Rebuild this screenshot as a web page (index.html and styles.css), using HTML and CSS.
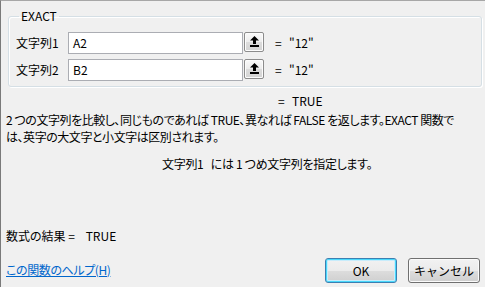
FILE: index.html
```html
<!DOCTYPE html>
<html lang="ja">
<head>
  <meta charset="UTF-8">
  <title>関数の引数</title>
  <link rel="stylesheet" href="styles.css">
</head>
<body>
  <div class="dialog">
    <fieldset class="group-box">
      <legend class="group-title">EXACT</legend>

      <div class="arg-row">
        <span class="arg-label">文字列1</span>
        <div class="arg-input">A2</div>
        <button class="ref-button">
          <svg width="9" height="11" viewBox="0 0 9 11"><path d="M4.5 0 L9 4.5 H6 V8 H3 V4.5 H0 Z" fill="#000"/><rect x="0" y="9" width="9" height="2" fill="#000"/></svg>
        </button>
        <span class="arg-eq">=</span>
        <span class="arg-value">"12"</span>
      </div>

      <div class="arg-row">
        <span class="arg-label">文字列2</span>
        <div class="arg-input">B2</div>
        <button class="ref-button">
          <svg width="9" height="11" viewBox="0 0 9 11"><path d="M4.5 0 L9 4.5 H6 V8 H3 V4.5 H0 Z" fill="#000"/><rect x="0" y="9" width="9" height="2" fill="#000"/></svg>
        </button>
        <span class="arg-eq">=</span>
        <span class="arg-value">"12"</span>
      </div>
    </fieldset>

    <div class="func-result"><span class="arg-eq">=</span><span>TRUE</span></div>

    <p class="func-desc">2 つの文字列を比較し、同じものであれば TRUE、異なれば FALSE を返します。EXACT 関数で<br>は、英字の大文字と小文字は区別されます。</p>

    <p class="arg-desc">文字列1&nbsp;&nbsp; には 1 つめ文字列を指定します。</p>

    <div class="formula-result">数式の結果 =&nbsp;&nbsp;&nbsp; TRUE</div>

    <div class="footer">
      <a href="#" class="help-link">この関数のヘルプ(H)</a>
      <div class="buttons">
        <button class="btn btn-default">OK</button>
        <button class="btn">キャンセル</button>
      </div>
    </div>
  </div>
</body>
</html>
```

FILE: styles.css
```css
* {
  margin: 0;
  padding: 0;
  box-sizing: border-box;
}

body {
  font-family: "Noto Sans CJK JP", "Noto Sans", sans-serif;
  font-size: 12px;
  line-height: 16px;
  font-feature-settings: "palt";
  color: #000;
  background-color: #f0f0f0;
}

.dialog {
  width: 485px;
  height: 287px;
  background-color: #f0f0f0;
  border-top: 1px solid #a7a7a7;
  border-left: 1px solid #7a7a7a;
  display: flex;
  flex-direction: column;
}

.group-box {
  margin: 7px 3px 0 7px;
  border: 1px solid #d5dfe5;
  border-radius: 3px;
  box-shadow: inset 1px 1px 0 #fff, 1px 1px 0 #fff;
  padding: 8px 0 5px 7px;
  display: flex;
  flex-direction: column;
  gap: 5px;
}

.group-title {
  margin-left: 3px;
  padding: 0 2px;
  line-height: 16px;
}

.arg-row {
  display: flex;
  align-items: center;
  height: 22px;
}

.arg-label {
  width: 52px;
}

.arg-input {
  width: 175px;
  height: 22px;
  background-color: #fff;
  border: 1px solid #abadb3;
  padding: 0 4px;
  line-height: 20px;
}

.ref-button {
  width: 20px;
  height: 20px;
  margin-left: 1px;
  align-self: flex-start;
  border: 1px solid #8c8c8c;
  border-radius: 2px;
  background: linear-gradient(to bottom, #fafafa 0%, #ececec 50%, #dcdcdc 51%, #d4d4d4 100%);
  box-shadow: inset 0 0 0 1px #fcfcfc;
  display: flex;
  align-items: flex-start;
  justify-content: center;
  padding-top: 3px;
}

.arg-eq {
  margin-left: 11px;
  width: 14px;
}

.func-result {
  margin: 6px 0 0 266px;
  display: flex;
}

.func-desc {
  margin: 2px 0 0 5px;
  line-height: 17px;
  letter-spacing: -0.45px;
}

.arg-desc {
  margin: 11px 0 0 161px;
  letter-spacing: -0.3px;
}

.formula-result {
  margin: 56px 0 0 5px;
}

.footer {
  margin-top: 14px;
  display: flex;
  align-items: center;
  justify-content: space-between;
  padding: 0 5px;
}

.help-link {
  color: #0066cc;
  text-decoration: underline;
  letter-spacing: -0.4px;
  margin-top: -2px;
}

.buttons {
  display: flex;
  gap: 11px;
}

.btn {
  width: 72px;
  height: 25px;
  font-family: inherit;
  font-size: 12px;
  color: #000;
  border: 1px solid #707070;
  border-radius: 3px;
  background: linear-gradient(to bottom, #f2f2f2 0%, #ebebeb 50%, #dddddd 51%, #cfcfcf 100%);
  box-shadow: inset 0 0 0 1px #fbfbfb;
}

.btn-default {
  border-color: #3c7fb1;
  box-shadow: inset 0 0 0 1px #48d8fb, inset 0 0 0 2px #c8ecfb;
}
```
